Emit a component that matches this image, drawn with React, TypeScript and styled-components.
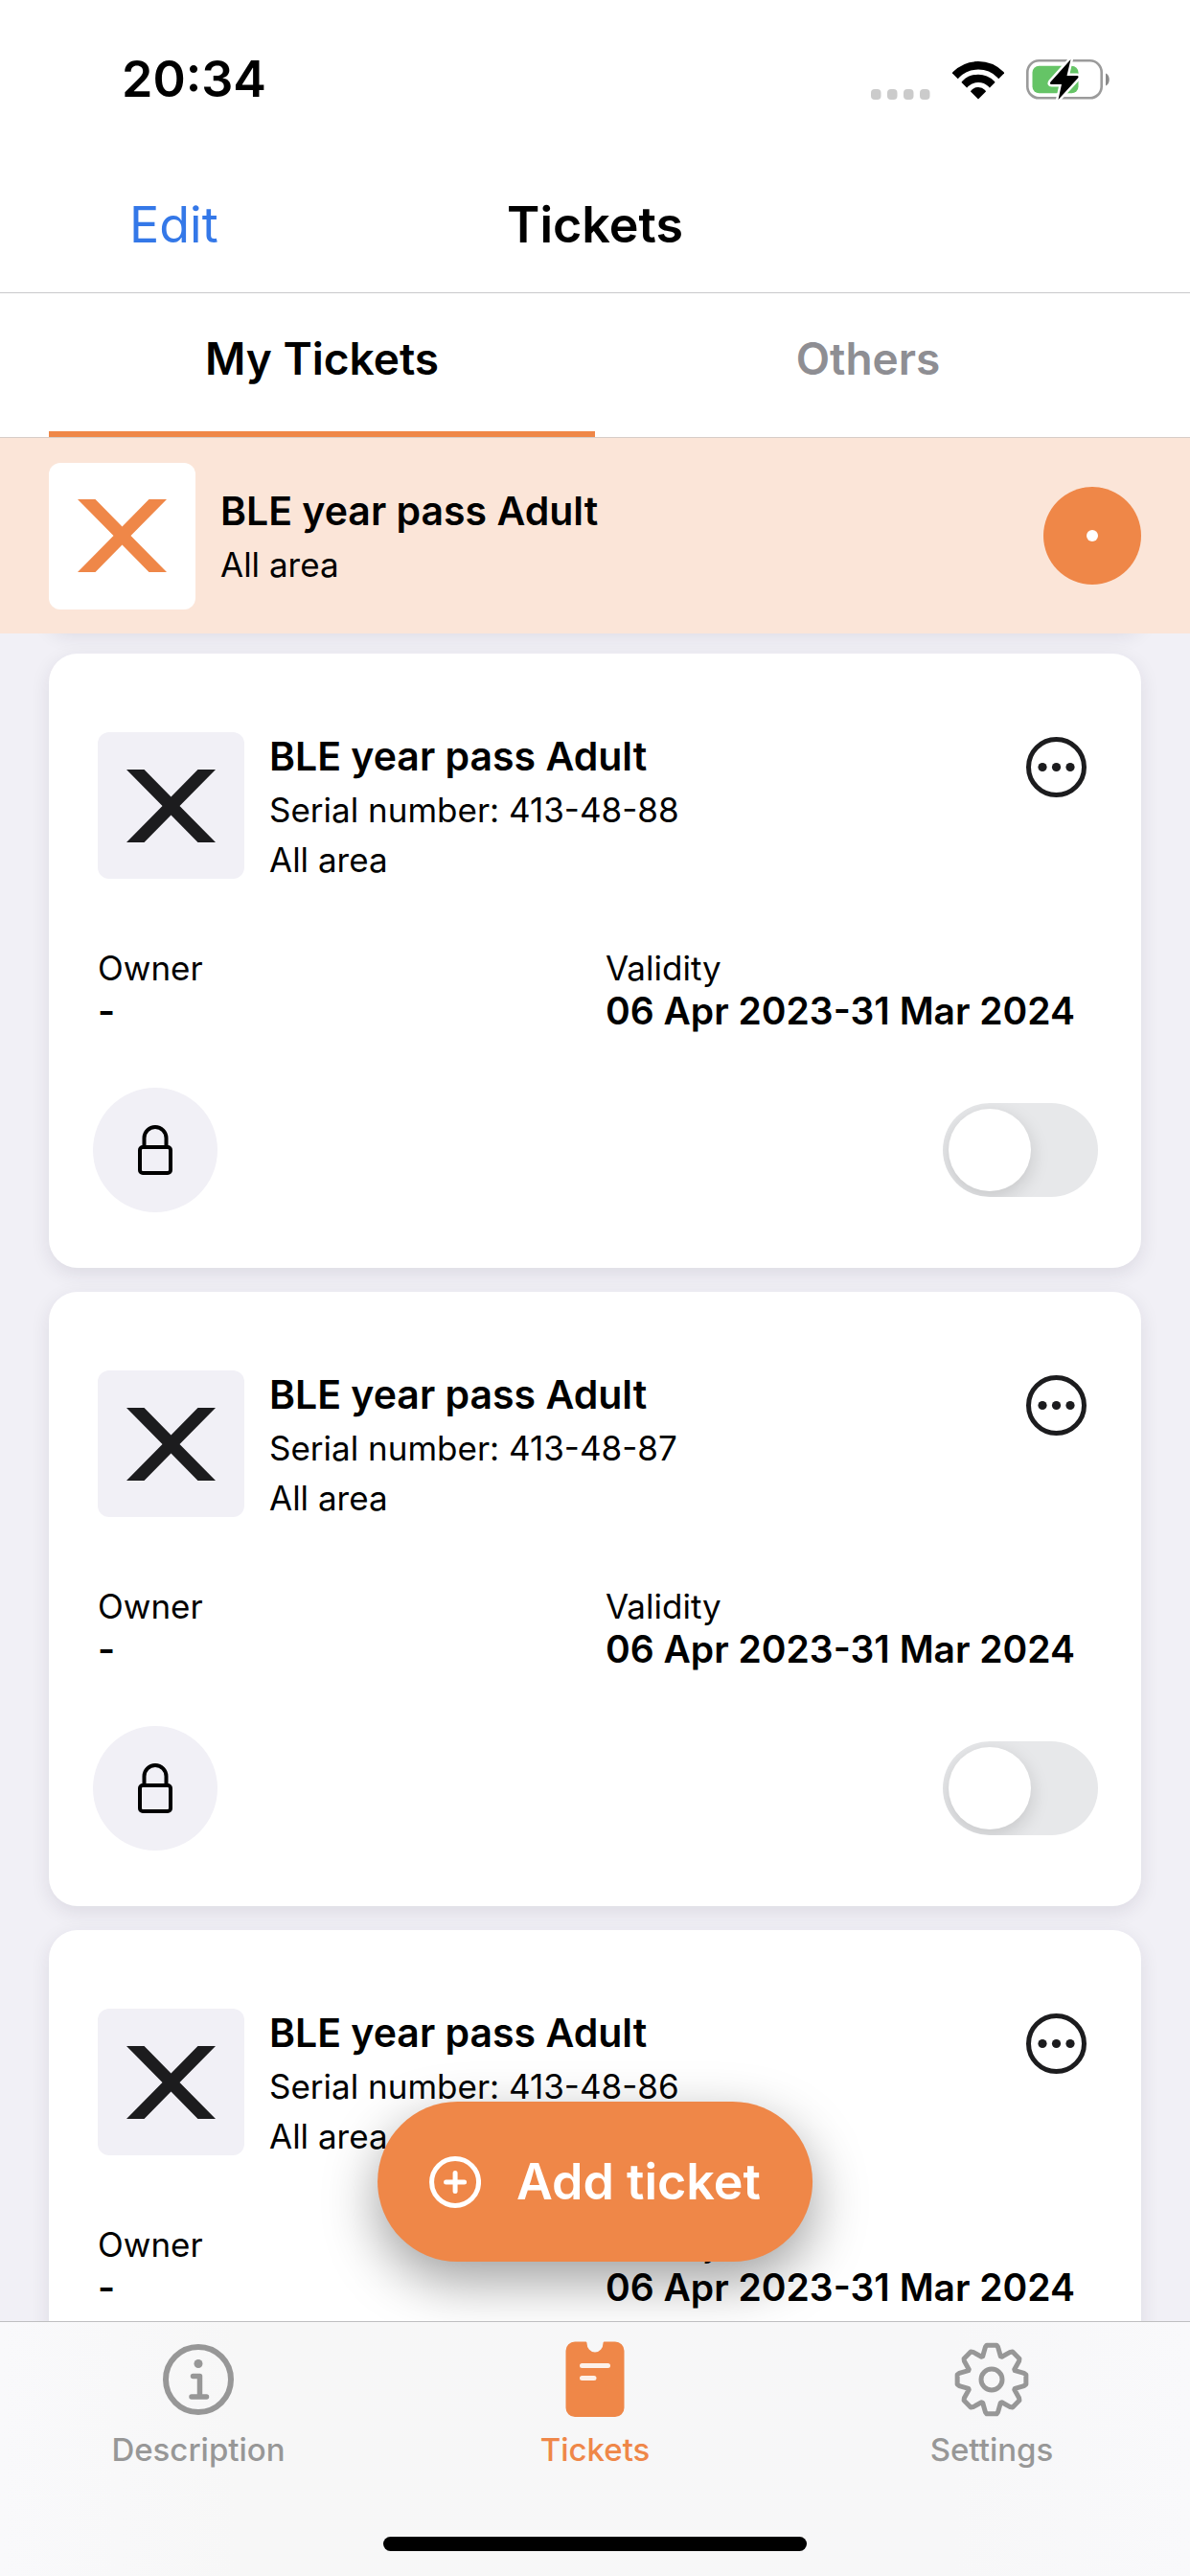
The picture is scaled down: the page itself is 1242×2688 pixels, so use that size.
import React, { useState } from "react";
import styled, { createGlobalStyle } from "styled-components";

const color = {
  accent: "#ef8748",
  accentSoft: "#fbe5d8",
  surface: "#f1f0f6",
  ink: "#000000",
  icon: "#1c1c1e",
  muted: "#8e8e93",
  tabMuted: "#979797",
  link: "#3478e8",
  line: "#c9c9cb",
};

const GlobalStyle = createGlobalStyle`
  *, *::before, *::after { box-sizing: border-box; }
  body {
    margin: 0;
    background: #ffffff;
    color: ${color.ink};
    font-family: Inter, "Liberation Sans", sans-serif;
  }
  button { font: inherit; color: inherit; background: none; border: 0; padding: 0; cursor: pointer; }
  h1, h2, p, dl, dd { margin: 0; }
  svg { display: block; flex: none; }
`;

const Screen = styled.div`
  display: flex;
  flex-direction: column;
  height: 100vh;
  overflow: hidden;
`;

const StatusBar = styled.div`
  display: flex;
  align-items: center;
  justify-content: space-between;
  height: 165px;
  padding: 0 84px 0 127px;
  flex: none;
`;

const Clock = styled.time`
  font-size: 52px;
  font-weight: 600;
  line-height: 60px;
`;

const StatusIcons = styled.div`
  display: flex;
  align-items: flex-end;
  gap: 23px;
`;

const NavBar = styled.header`
  display: grid;
  grid-template-columns: 1fr auto 1fr;
  align-items: center;
  height: 141px;
  padding: 0 135px;
  border-bottom: 1px solid ${color.line};
  flex: none;
`;

const EditButton = styled.button`
  justify-self: start;
  color: ${color.link};
  font-size: 52px;
  line-height: 60px;
`;

const Title = styled.h1`
  font-size: 52px;
  font-weight: 600;
  line-height: 60px;
`;

const Segments = styled.div`
  display: grid;
  grid-template-columns: 1fr 1fr;
  padding: 0 51px;
  border-bottom: 1px solid #d6cdc8;
  flex: none;
`;

const Segment = styled.button<{ $active: boolean }>`
  height: 150px;
  padding-bottom: 9px;
  border-bottom: 6px solid ${(p) => (p.$active ? color.accent : "transparent")};
  color: ${(p) => (p.$active ? color.ink : color.muted)};
  font-size: 46px;
  font-weight: 600;
`;

const Banner = styled.section`
  position: relative;
  z-index: 1;
  display: flex;
  align-items: center;
  gap: 26px;
  height: 204px;
  padding: 0 51px;
  background: ${color.accentSoft};
  flex: none;
`;

const LogoTile = styled.div<{ $active?: boolean }>`
  display: flex;
  align-items: center;
  justify-content: center;
  width: 153px;
  height: 153px;
  border-radius: 12px;
  background: ${(p) => (p.$active ? "#ffffff" : color.surface)};
  color: ${(p) => (p.$active ? color.accent : color.icon)};
  flex: none;
`;

const PassText = styled.div`
  display: flex;
  flex: 1;
  flex-direction: column;
  gap: 10px;
  min-width: 0;
`;

const PassName = styled.h2`
  font-size: 41px;
  font-weight: 600;
  line-height: 50px;
`;

const PassLine = styled.p`
  font-size: 35px;
  line-height: 42px;
`;

const ActiveMark = styled.div`
  display: flex;
  align-items: center;
  justify-content: center;
  width: 102px;
  height: 102px;
  border-radius: 50%;
  background: ${color.accent};

  &::after {
    content: "";
    width: 12px;
    height: 12px;
    border-radius: 50%;
    background: #ffffff;
  }
`;

const Content = styled.main`
  position: relative;
  display: flex;
  flex: 1;
  flex-direction: column;
  min-height: 0;
  background: ${color.surface};
`;

const TicketList = styled.div`
  display: flex;
  flex: 1;
  flex-direction: column;
  gap: 25px;
  min-height: 0;
  padding: 0 51px;
  overflow: hidden;
`;

const cardShadow = "0 6px 20px rgba(40, 30, 60, 0.1)";

/* Lower edge of the active ticket, scrolled up behind the banner. */
const ScrolledCard = styled.div`
  height: 40px;
  margin-top: -44px;
  border-radius: 30px;
  background: #ffffff;
  box-shadow: ${cardShadow};
  flex: none;
`;

const Card = styled.article`
  padding: 82px 51px 58px;
  border-radius: 30px;
  background: #ffffff;
  box-shadow: ${cardShadow};
  flex: none;
`;

const CardHead = styled.div`
  display: flex;
  align-items: flex-start;
  gap: 26px;
`;

const MoreButton = styled.button`
  color: ${color.icon};
`;

const Facts = styled.dl`
  display: grid;
  grid-template-columns: 1fr 1fr;
  column-gap: 22px;
  margin-top: 70px;
`;

const FactLabel = styled.dt`
  font-size: 35px;
  line-height: 44px;
`;

const FactValue = styled.dd`
  font-size: 39px;
  font-weight: 600;
  line-height: 46px;
  white-space: nowrap;
`;

const CardFoot = styled.div`
  display: flex;
  align-items: center;
  justify-content: space-between;
  margin: 57px -6px 0 -5px;
`;

const LockButton = styled.button`
  display: flex;
  align-items: center;
  justify-content: center;
  width: 130px;
  height: 130px;
  border-radius: 50%;
  background: ${color.surface};
`;

const Switch = styled.input`
  appearance: none;
  display: flex;
  align-items: center;
  width: 162px;
  height: 98px;
  margin: 0;
  padding: 6px;
  border-radius: 49px;
  background: #e7e8ea;
  overflow: hidden;
  cursor: pointer;

  &::before {
    content: "";
    width: 86px;
    height: 86px;
    border-radius: 50%;
    background: #ffffff;
    box-shadow: 0 6px 20px rgba(0, 0, 0, 0.15);
  }

  &:checked {
    justify-content: flex-end;
    background: ${color.accent};
  }
`;

const AddButton = styled.button`
  position: absolute;
  bottom: 62px;
  left: 50%;
  display: flex;
  align-items: center;
  gap: 37px;
  height: 167px;
  padding: 0 54px;
  border-radius: 84px;
  background: ${color.accent};
  box-shadow: 0 20px 56px rgba(0, 0, 0, 0.38);
  color: #ffffff;
  font-size: 52px;
  font-weight: 600;
  white-space: nowrap;
  transform: translateX(-50%);
`;

const TabBar = styled.footer`
  position: relative;
  border-top: 1px solid #bfbfc1;
  background: linear-gradient(90deg, #f9f9fb, #f7f7f7 20%, #f7f7f8 80%, #f9f9fb);
  flex: none;
`;

const Tabs = styled.nav`
  display: grid;
  grid-template-columns: repeat(3, 1fr);
  padding-top: 20px;
`;

const Tab = styled.a<{ $active: boolean }>`
  display: flex;
  flex-direction: column;
  align-items: center;
  gap: 13px;
  color: ${(p) => (p.$active ? color.accent : color.tabMuted)};
  font-size: 33px;
  font-weight: 500;
  line-height: 40px;
  text-decoration: none;
`;

const HomeIndicator = styled.div`
  width: 442px;
  height: 15px;
  margin: 71px auto 26px;
  border-radius: 8px;
  background: #000000;
`;

const SignalDots = () => (
  <svg width="62" height="11" viewBox="0 0 62 11" fill="#cbcbcb" aria-hidden="true">
    {[0, 17, 34, 51].map((x) => (
      <rect key={x} x={x} width="10.5" height="11" rx="4" />
    ))}
  </svg>
);

const WifiIcon = () => (
  <svg width="54" height="40" viewBox="0 0 54 40" aria-hidden="true">
    <clipPath id="wifi-fan">
      <path d="M27 39.5L-2 10.5V-5H56v15.500z" />
    </clipPath>
    <g clipPath="url(#wifi-fan)" fill="none" stroke="#000">
      <circle cx="27" cy="37" r="32.700" strokeWidth="8.500" />
      <circle cx="27" cy="37" r="19.200" strokeWidth="8.200" />
      <circle cx="27" cy="37" r="10" fill="#000" stroke="none" />
    </g>
  </svg>
);

const BatteryIcon = () => (
  <svg width="87" height="42" viewBox="0 0 87 42" aria-hidden="true">
    <rect x="1.300" y="1.300" width="77.400" height="39" rx="12" fill="none" stroke="#9b9b9b" strokeWidth="2.600" />
    <path d="M83 14.500c5 2 5 11 0 13z" fill="#8a8a8a" />
    <rect x="6.500" y="6.700" width="48" height="28.500" rx="7" fill="#65c466" />
    <path
      d="M46.500 0L25.500 23.500q-1.500 2.500 1 2.500H37L33.500 42 54 19.500q1.500-2.500-1-2.500H42.500z"
      fill="#000"
      stroke="#fff"
      strokeWidth="5"
      strokeLinejoin="round"
      paintOrder="stroke"
    />
  </svg>
);

const CrossLogo = () => (
  <svg width="93" height="76" viewBox="0 0 93 76" fill="currentColor" aria-hidden="true">
    <path d="M0 0H18.500L46.500 28.500 74.500 0H93L55.500 38 93 76H74.500L46.500 47.500 18.500 76H0L37.500 38z" />
  </svg>
);

const MoreIcon = () => (
  <svg width="76" height="76" viewBox="0 0 76 76" aria-hidden="true">
    <circle cx="38.500" cy="36.500" r="29" fill="none" stroke="currentColor" strokeWidth="5" />
    <g fill="currentColor">
      <circle cx="24" cy="36.500" r="4.600" />
      <circle cx="38.500" cy="36.500" r="4.600" />
      <circle cx="53" cy="36.500" r="4.600" />
    </g>
  </svg>
);

const LockIcon = () => (
  <svg width="36" height="52" viewBox="0 0 36 52" fill="none" stroke="#000" strokeWidth="4" aria-hidden="true">
    <rect x="2" y="23" width="32" height="27" rx="3" />
    <path d="M6.500 23V13.500a11.500 11.500 0 0 1 23 0V23" />
  </svg>
);

const PlusCircleIcon = () => (
  <svg width="54" height="54" viewBox="0 0 54 54" fill="none" stroke="#fff" strokeWidth="5" strokeLinecap="round" aria-hidden="true">
    <circle cx="27" cy="27" r="24.500" />
    <path d="M27 17.500v19M17.500 27h19" />
  </svg>
);

const InfoIcon = () => (
  <svg width="80" height="80" viewBox="-40 -40 80 80" fill="none" stroke="currentColor" strokeWidth="5" strokeLinecap="round" strokeLinejoin="round" aria-hidden="true">
    <circle r="34" strokeWidth="6" />
    <circle cy="-16.500" r="4.500" fill="currentColor" stroke="none" />
    <path d="M-5.500-3.500H1.500V18M-7 18H8.500" strokeWidth="5.500" />
  </svg>
);

const TicketIcon = () => (
  <svg width="80" height="80" viewBox="0 0 80 80" aria-hidden="true">
    <path
      d="M19 0.500H30.500Q31.500 0.500 31.500 2a8.500 9.500 0 0 0 17 0Q48.500 0.500 49.500 0.500H61A9.500 9.500 0 0 1 70.500 10V69.500A9.500 9.500 0 0 1 61 79H19A9.500 9.500 0 0 1 9.500 69.500V10A9.500 9.500 0 0 1 19 0.500z"
      fill="currentColor"
    />
    <path d="M26.500 25.500H53.500M26.500 38.500H39" fill="none" stroke="#fdf1e9" strokeWidth="5" strokeLinecap="round" />
  </svg>
);

const polar = (radius: number, degrees: number) => {
  const a = (degrees * Math.PI) / 180;
  return `${(radius * Math.sin(a)).toFixed(2)} ${(-radius * Math.cos(a)).toFixed(2)}`;
};

const gearPath =
  "M" +
  Array.from({ length: 8 }, (_, i) => i * 45)
    .flatMap((d) => [
      polar(34.5, d - 11),
      polar(36.2, d - 8),
      polar(36.2, d + 8),
      polar(34.5, d + 11),
      polar(26, d + 21),
      polar(26, d + 24),
    ])
    .join("L") +
  "z";

const GearIcon = () => (
  <svg width="80" height="80" viewBox="-40 -40 80 80" fill="none" stroke="currentColor" strokeWidth="5" strokeLinejoin="round" aria-hidden="true">
    <path d={gearPath} />
    <circle r="11" />
  </svg>
);

type Ticket = { serial: string; owner: string; validity: string };

const tickets: Ticket[] = ["413-48-88", "413-48-87", "413-48-86"].map((serial) => ({
  serial,
  owner: "-",
  validity: "06 Apr 2023-31 Mar 2024",
}));

const TicketCard = ({ ticket }: { ticket: Ticket }) => (
  <Card>
    <CardHead>
      <LogoTile>
        <CrossLogo />
      </LogoTile>
      <PassText>
        <PassName>BLE year pass Adult</PassName>
        <PassLine>Serial number: {ticket.serial}</PassLine>
        <PassLine>All area</PassLine>
      </PassText>
      <MoreButton type="button" aria-label="More options">
        <MoreIcon />
      </MoreButton>
    </CardHead>
    <Facts>
      <div>
        <FactLabel>Owner</FactLabel>
        <FactValue>{ticket.owner}</FactValue>
      </div>
      <div>
        <FactLabel>Validity</FactLabel>
        <FactValue>{ticket.validity}</FactValue>
      </div>
    </Facts>
    <CardFoot>
      <LockButton type="button" aria-label="Lock">
        <LockIcon />
      </LockButton>
      <Switch type="checkbox" role="switch" aria-label={`Activate ticket ${ticket.serial}`} />
    </CardFoot>
  </Card>
);

const tabs = [
  { label: "Description", Icon: InfoIcon },
  { label: "Tickets", Icon: TicketIcon },
  { label: "Settings", Icon: GearIcon },
];

export default function App() {
  const [segment, setSegment] = useState("My Tickets");

  return (
    <Screen>
      <GlobalStyle />
      <StatusBar>
        <Clock>20:34</Clock>
        <StatusIcons>
          <SignalDots />
          <WifiIcon />
          <BatteryIcon />
        </StatusIcons>
      </StatusBar>
      <NavBar>
        <EditButton type="button">Edit</EditButton>
        <Title>Tickets</Title>
      </NavBar>
      <Segments role="tablist">
        {["My Tickets", "Others"].map((name) => (
          <Segment
            key={name}
            type="button"
            role="tab"
            aria-selected={segment === name}
            $active={segment === name}
            onClick={() => setSegment(name)}
          >
            {name}
          </Segment>
        ))}
      </Segments>
      <Banner>
        <LogoTile $active>
          <CrossLogo />
        </LogoTile>
        <PassText>
          <PassName>BLE year pass Adult</PassName>
          <PassLine>All area</PassLine>
        </PassText>
        <ActiveMark />
      </Banner>
      <Content>
        <TicketList>
          <ScrolledCard />
          {tickets.map((ticket) => (
            <TicketCard key={ticket.serial} ticket={ticket} />
          ))}
        </TicketList>
        <AddButton type="button">
          <PlusCircleIcon />
          Add ticket
        </AddButton>
      </Content>
      <TabBar>
        <Tabs>
          {tabs.map(({ label, Icon }) => (
            <Tab key={label} href={`#${label.toLowerCase()}`} $active={label === "Tickets"}>
              <Icon />
              {label}
            </Tab>
          ))}
        </Tabs>
        <HomeIndicator />
      </TabBar>
    </Screen>
  );
}
